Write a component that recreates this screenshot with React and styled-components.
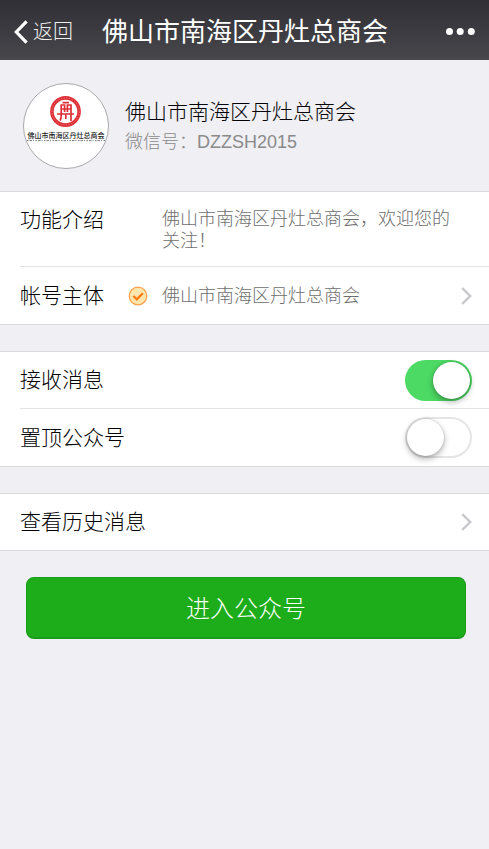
import React, { useState } from 'react'
import styled, { createGlobalStyle } from 'styled-components'

const GlobalStyle = createGlobalStyle`
  * {
    box-sizing: border-box;
  }
  body {
    margin: 0;
    background-color: #efeff4;
    color: #000;
    font-family: "Liberation Sans", "Noto Sans CJK SC", sans-serif;
    font-weight: 300;
  }
`

const Header = styled.header`
  display: grid;
  grid-template-columns: 88px 1fr 88px;
  align-items: center;
  height: 60px;
  padding: 4px 14px 0;
  background: linear-gradient(#302f35, #48474c);
  color: #fff;
`

const Back = styled.a`
  display: flex;
  align-items: center;
  gap: 5px;
  color: #f0f0f2;
  font-size: 20px;
  line-height: 24px;
  text-decoration: none;
`

const Title = styled.h1`
  display: flex;
  justify-content: center;
  margin: 0;
  font-size: 26px;
  font-weight: 400;
  line-height: 32px;
  white-space: nowrap;
`

const MoreButton = styled.button`
  justify-self: end;
  display: flex;
  padding: 0;
  border: none;
  background: none;
  color: #fff;
  cursor: pointer;
`

const Profile = styled.section`
  display: flex;
  align-items: center;
  gap: 16px;
  height: 131px;
  padding: 0 23px;
`

const Avatar = styled.div`
  width: 86px;
  height: 86px;
  border: 1px solid #a9a9ad;
  border-radius: 50%;
  background-color: #fff;
  overflow: hidden;

  svg {
    display: block;
  }
`

const Name = styled.h2`
  margin: 0;
  font-size: 21px;
  font-weight: 300;
  line-height: 32px;
`

const WechatId = styled.p`
  margin: 0;
  color: #8a8a8a;
  font-size: 18px;
  line-height: 28px;
`

const Group = styled.section`
  margin-bottom: 26px;
  padding-left: 20px;
  border-top: 1px solid #dadade;
  border-bottom: 1px solid #dadade;
  background-color: #fff;
`

const Row = styled.div`
  display: flex;
  align-items: ${({ $top }) => ($top ? 'flex-start' : 'center')};
  min-height: 56px;
  padding: ${({ $top }) => ($top ? '16px 28px 14px 0' : '0 17px 0 0')};
  color: inherit;
  font-size: 21px;
  line-height: 24px;
  text-decoration: none;

  & + & {
    min-height: 58px;
    border-top: 1px solid #e3e3e5;
  }
`

const Label = styled.div`
  width: 108px;
  white-space: nowrap;
`

const RowLabel = styled.label`
  flex: 1;
`

const Badge = styled.div`
  display: flex;
  width: 34px;
`

const Value = styled.div`
  flex: 1;
  color: #6e6e6e;
  font-size: 18px;
  line-height: 22px;
`

const Switch = styled.input`
  appearance: none;
  display: flex;
  width: 67px;
  height: 41px;
  margin: 0;
  padding: 2px;
  border-radius: 21px;
  background-color: #fff;
  box-shadow: inset 0 0 0 2px #e5e5e5;
  cursor: pointer;

  &::before {
    content: '';
    width: 37px;
    height: 37px;
    border-radius: 50%;
    background-color: #fff;
    box-shadow: 0 3px 6px rgba(0, 0, 0, 0.3), 0 0 2px rgba(0, 0, 0, 0.25);
  }

  &:checked {
    justify-content: flex-end;
    background-color: #4cd964;
    box-shadow: none;
  }
`

const EnterButton = styled.button`
  display: block;
  width: calc(100% - 49px);
  height: 62px;
  margin: 0 23px 26px 26px;
  padding: 0 0 2px;
  border: 1px solid #1a9c1a;
  border-bottom-width: 2px;
  border-radius: 8px;
  background-color: #1dad1a;
  color: #fff;
  font-family: inherit;
  font-size: 24px;
  font-weight: 300;
  cursor: pointer;
`

const BackIcon = () => (
  <svg width="14" height="24" viewBox="0 0 14 24" fill="none" stroke="#fff" strokeWidth="3.2" aria-hidden="true">
    <path d="M12.6 1.4 2.3 12l10.3 10.6" />
  </svg>
)

const MoreIcon = () => (
  <svg width="30" height="8" viewBox="0 0 30 8" fill="currentColor" aria-hidden="true">
    <circle cx="3.5" cy="3.6" r="3.5" />
    <circle cx="14.2" cy="3.6" r="3.5" />
    <circle cx="25.3" cy="3.6" r="3.5" />
  </svg>
)

const Chevron = () => (
  <svg width="11" height="18" viewBox="0 0 11 18" fill="none" stroke="#c7c7cc" strokeWidth="2.4" aria-hidden="true">
    <path d="M1.2 1.2 9.2 9l-8 7.8" />
  </svg>
)

const VerifiedIcon = () => (
  <svg width="20" height="20" viewBox="0 0 20 20" fill="none" aria-hidden="true">
    <circle cx="10" cy="10" r="8.8" fill="#ffe6ae" stroke="#fba04a" strokeWidth="1.2" />
    <path d="m5.4 10 3.4 3.3 6-6" stroke="#ff7a0e" strokeWidth="2.3" />
  </svg>
)

const Logo = () => (
  <svg width="84" height="84" viewBox="0 0 84 84" aria-hidden="true">
    <g fill="none" stroke="#dd2f35">
      <circle cx="41.5" cy="27.5" r="13.6" strokeWidth="3.6" />
      <circle cx="41.5" cy="27.5" r="13.6" stroke="#ee8488" strokeWidth="0.8" strokeDasharray="1.5 1.3" />
      <path d="M36 36.5q1.2-2 1.2-4V21h3.4v7M47 37V21h-3.6v7M33 30h17M37 25h10M41.8 30v5" strokeWidth="1.7" />
      <path d="M38.5 18.6h6.4" strokeWidth="1.6" />
    </g>
    <text x="42" y="54" fontSize="7" fontWeight="500" textAnchor="middle" fill="#222">
      佛山市南海区丹灶总商会
    </text>
    <path d="M3 56.6h78" stroke="#777" strokeWidth="1" strokeDasharray="1.5 1 2.5 1 1 1.5" />
  </svg>
)

const App = () => {
  const [receive, setReceive] = useState(true)
  const [pinned, setPinned] = useState(false)

  return (
    <>
      <GlobalStyle />
      <Header>
        <Back href="#back">
          <BackIcon />
          返回
        </Back>
        <Title>佛山市南海区丹灶总商会</Title>
        <MoreButton type="button" aria-label="更多">
          <MoreIcon />
        </MoreButton>
      </Header>
      <main>
        <Profile>
          <Avatar>
            <Logo />
          </Avatar>
          <div>
            <Name>佛山市南海区丹灶总商会</Name>
            <WechatId>微信号：DZZSH2015</WechatId>
          </div>
        </Profile>

        <Group>
          <Row $top>
            <Label>功能介绍</Label>
            <Badge />
            <Value>佛山市南海区丹灶总商会，欢迎您的关注！</Value>
          </Row>
          <Row as="a" href="#owner">
            <Label>帐号主体</Label>
            <Badge>
              <VerifiedIcon />
            </Badge>
            <Value>佛山市南海区丹灶总商会</Value>
            <Chevron />
          </Row>
        </Group>

        <Group>
          <Row>
            <RowLabel htmlFor="receive">接收消息</RowLabel>
            <Switch
              id="receive"
              type="checkbox"
              checked={receive}
              onChange={(e) => setReceive(e.target.checked)}
            />
          </Row>
          <Row>
            <RowLabel htmlFor="pinned">置顶公众号</RowLabel>
            <Switch
              id="pinned"
              type="checkbox"
              checked={pinned}
              onChange={(e) => setPinned(e.target.checked)}
            />
          </Row>
        </Group>

        <Group>
          <Row as="a" href="#history">
            <RowLabel as="span">查看历史消息</RowLabel>
            <Chevron />
          </Row>
        </Group>

        <EnterButton type="button">进入公众号</EnterButton>
      </main>
    </>
  )
}

export default App
